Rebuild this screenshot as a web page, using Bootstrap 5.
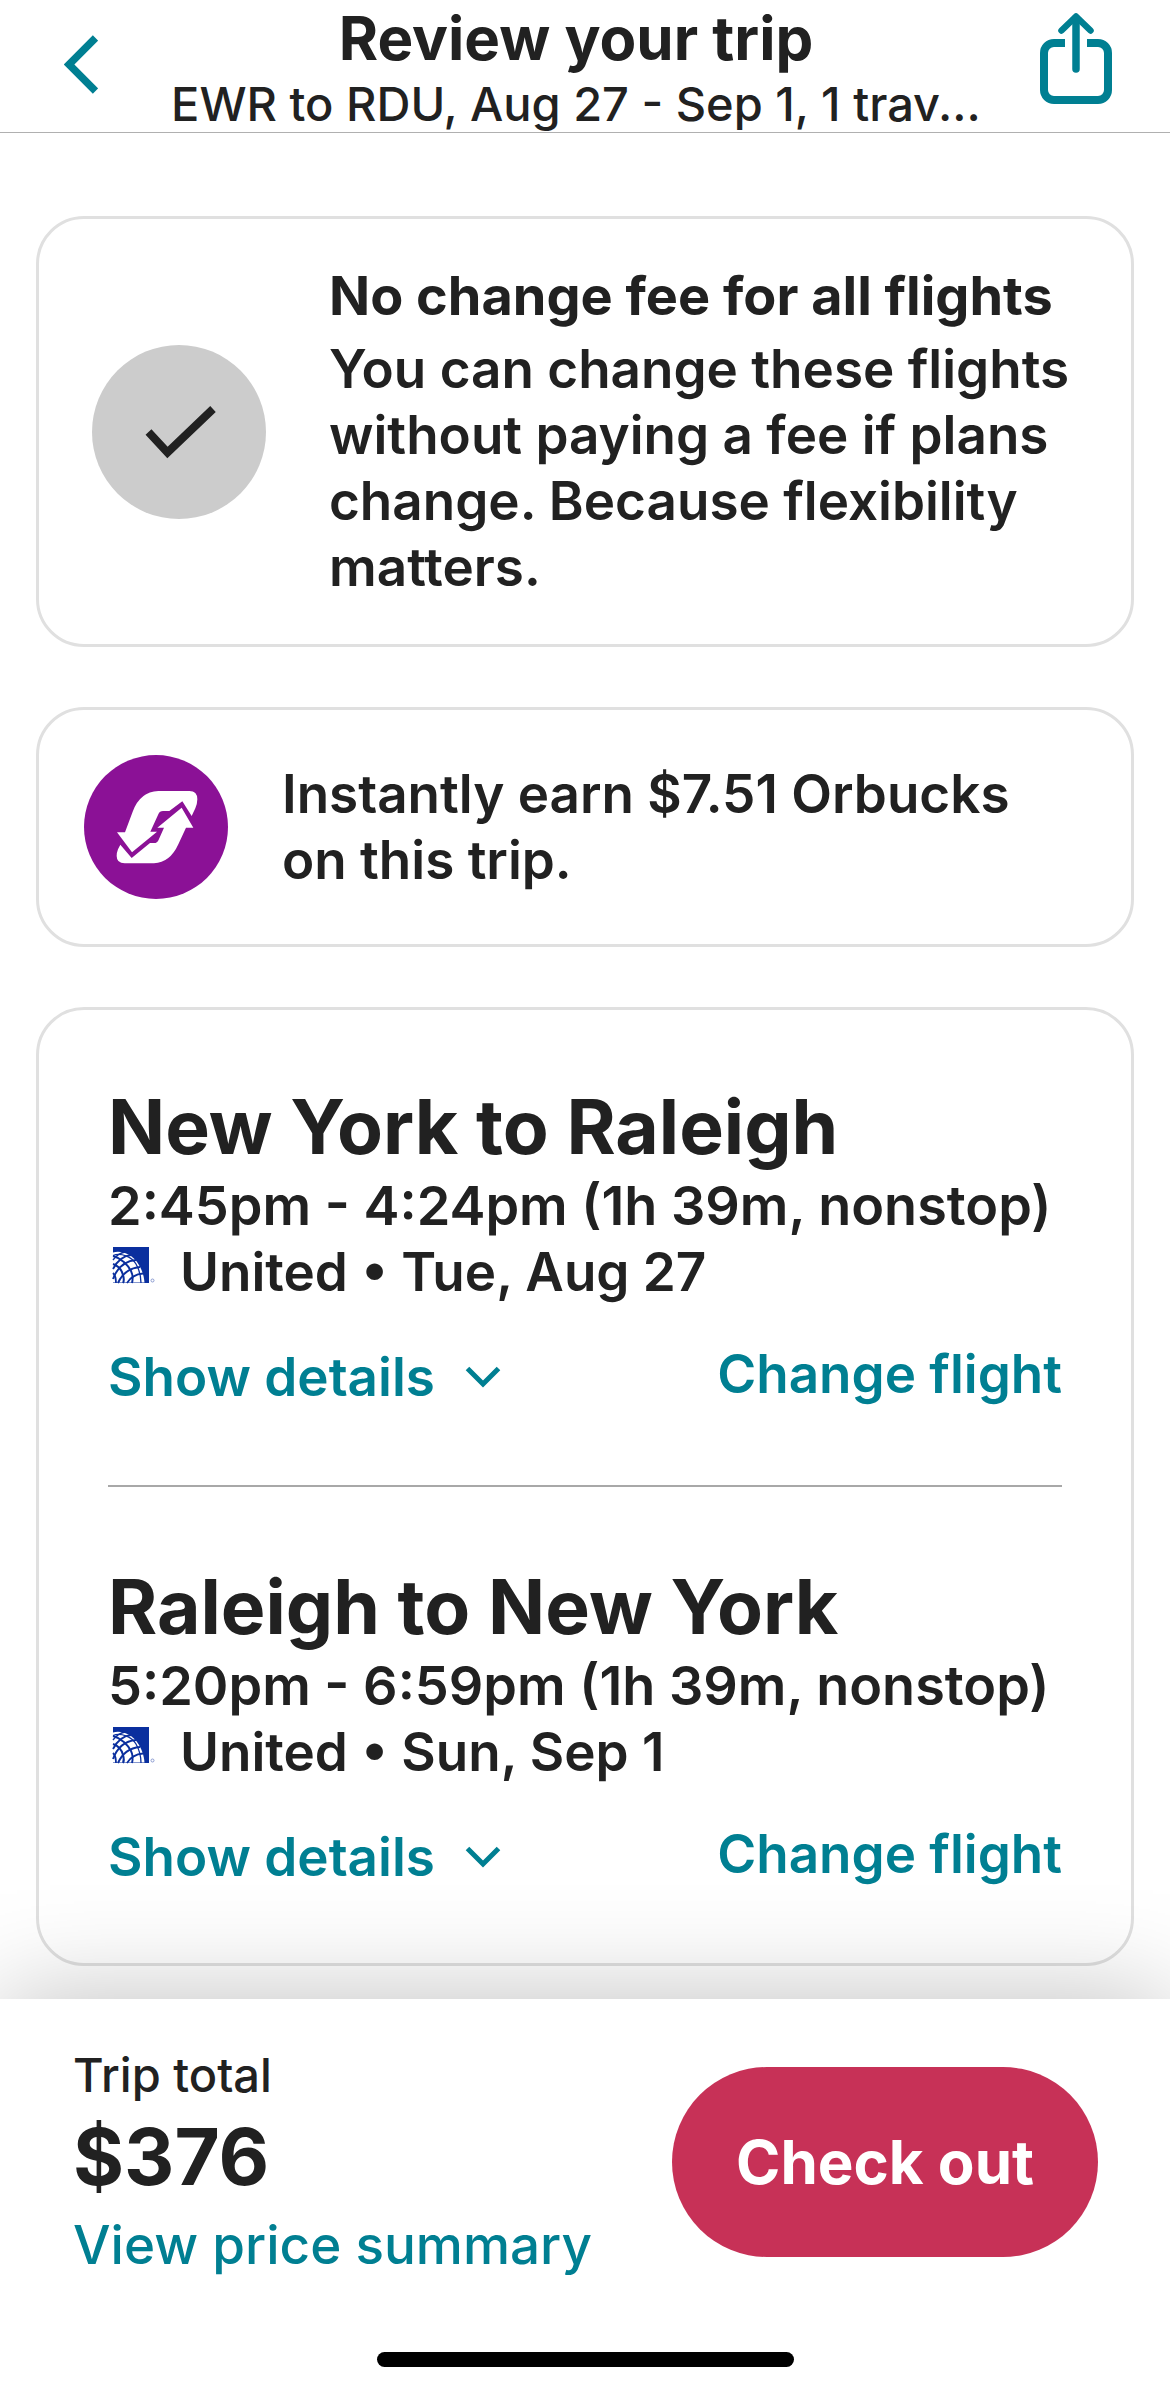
<!DOCTYPE html>
<html lang="en">
<head>
<meta charset="utf-8">
<meta name="viewport" content="width=device-width, initial-scale=1">
<title>Review your trip</title>
<link href="https://cdn.jsdelivr.net/npm/bootstrap@5.3.0/dist/css/bootstrap.min.css" rel="stylesheet">
<style>
  :root { --ink: #212121; --teal: #007f92; --line: #e0e0e0; }
  body { font-family: Inter, "Liberation Sans", sans-serif; font-size: 53px; line-height: 66px; font-weight: 600; color: var(--ink); background: #fff; }
  svg { display: block; flex: none; }
  .top-bar { padding: 2px 58px 0 64px; border-bottom: 1px solid #b0b0b0; }
  .top-title { font-size: 60px; line-height: 73px; font-weight: 700; }
  .top-sub { font-size: 47px; line-height: 57px; font-weight: 500; }
  .back-btn { width: 48px; }
  .plain-btn { border: 0; padding: 0; background: none; color: var(--teal); font-weight: 600; font-size: 53px; line-height: 66px; }
  .trip-main { padding: 83px 36px 33px; gap: 60px; }
  .trip-card { border: 3px solid var(--line); border-radius: 48px; }
  .fee-card { padding: 44px 53px; gap: 63px; }
  .fee-title { font-size: 54px; line-height: 66px; font-weight: 700; margin-bottom: 7px; }
  .reward-card { padding: 45px; gap: 54px; }
  .legs-card { padding: 70px 69px 73px; }
  .leg + .leg { border-top: 2px solid #a8a8a8; margin-top: 75px; padding-top: 73px; }
  .leg-title { font-size: 75px; line-height: 93px; font-weight: 700; }
  .leg-time { font-size: 54px; }
  .carrier { gap: 24px; }
  .leg-actions { margin-top: 36px; }
  .details-btn { gap: 30px; padding-top: 3px; }
  .teal-link { color: var(--teal); text-decoration: none; }
  .pay-bar { background: #fff; padding: 45px 72px 24px 73px; box-shadow: 0 0 100px rgba(0, 0, 0, .25); }
  .total-label { font-size: 47px; line-height: 62px; font-weight: 500; }
  .total-price { font-size: 78px; line-height: 102px; font-weight: 700; }
  .summary-link { line-height: 70px; margin-top: 2px; font-weight: 500; }
  .checkout-btn { min-width: 426px; height: 190px; background: #c73157; color: #fff; font-size: 60px; font-weight: 700; }
  .checkout-btn:hover { background: #b02a4c; color: #fff; }
  .home-bar { width: 417px; height: 15px; border-radius: 8px; background: #000; margin-top: 72px; }
</style>
</head>
<body class="d-flex flex-column min-vh-100">

<svg width="0" height="0" class="d-none" aria-hidden="true">
  <symbol id="globe" viewBox="0 0 48 48">
    <rect x="5" y="4" width="36" height="36" fill="#0a2f9e"/>
    <path d="M5 9.500C14 7 24 12 29 19C34 26 36 33 36.500 39.500H5Z" fill="#fff"/>
    <g fill="none" stroke="#0a2f9e" stroke-width="1.300">
      <path d="M5 12.500C13 9 24 14 28 21C32 28 33 34 33 40"/>
      <path d="M5 13C13 15 20 22 23 28C25 32 25 36 24 40" stroke-width="1.900"/>
      <path d="M5 21C11 23 14 28 15 32C16 35 16 38 15 40" stroke-width="2"/>
      <path d="M5 30C7 32 8 36 8 40" stroke-width="1.800"/>
      <path d="M5 17C8 13 12 10 17 9"/>
      <path d="M5 26C9 18 15 13 23 12" stroke-width="1.800"/>
      <path d="M5 36C9 25 17 18 28 17" stroke-width="1.900"/>
      <path d="M10 40C14 31 21 25 32 24" stroke-width="1.900"/>
      <path d="M19 40C22 35 28 31 35 30.500" stroke-width="1.800"/>
    </g>
    <circle cx="44.500" cy="37.500" r="1.500" fill="none" stroke="#8a9bd0" stroke-width="1"/>
  </symbol>
  <symbol id="chev" viewBox="0 0 36 22">
    <path d="M2.500 2.500L18 18L33.500 2.500" fill="none" stroke="currentColor" stroke-width="5"/>
  </symbol>
</svg>

<header class="top-bar d-flex align-items-start">
  <button type="button" class="plain-btn back-btn" aria-label="Back">
    <svg class="mt-4" width="34" height="76" viewBox="0 0 34 76"><path d="M31.500 12L5 38.500L31.500 65" fill="none" stroke="currentColor" stroke-width="7.500"/></svg>
  </button>
  <div class="flex-grow-1 text-center text-nowrap overflow-hidden">
    <h1 class="top-title m-0">Review your trip</h1>
    <div class="top-sub">EWR to RDU, Aug 27 - Sep 1, 1 trav...</div>
  </div>
  <button type="button" class="plain-btn" aria-label="Share">
    <svg width="72" height="104" viewBox="0 0 72 104" fill="none" stroke="currentColor">
      <path d="M25 41H14A10 10 0 0 0 4 51V88A10 10 0 0 0 14 98H58A10 10 0 0 0 68 88V51A10 10 0 0 0 58 41H47" stroke-width="8"/>
      <path d="M36 16V67" stroke-width="7.500" stroke-linecap="round"/>
      <path d="M21.500 28.500L36 14.500L50.500 28.500" stroke-width="6.500" stroke-linecap="round" stroke-linejoin="round"/>
    </svg>
  </button>
</header>

<main class="trip-main d-flex flex-column">
  <section class="trip-card fee-card d-flex align-items-center">
    <svg width="174" height="174" viewBox="0 0 174 174" aria-hidden="true">
      <circle cx="87" cy="87" r="87" fill="#ccc"/>
      <path d="M56.500 87L75.500 107.500L121 64" fill="none" stroke="#212121" stroke-width="8"/>
    </svg>
    <div>
      <h2 class="fee-title">No change fee for all flights</h2>
      <p class="m-0">You can change these flights without paying a fee if plans change. Because flexibility matters.</p>
    </div>
  </section>

  <section class="trip-card reward-card d-flex align-items-center">
    <svg width="144" height="144" viewBox="42 45 432 432" aria-hidden="true">
      <circle cx="258" cy="261" r="216" fill="#8b1196"/>
      <path fill="#fff" d="M265 153H358Q382 153 382 178Q382 190 376 205L365 228L337 184L298 213H279Q269 213 265 223L241 275H261L186 337L141 277H165L188 215Q210 155 265 153Z"/>
      <path fill="#fff" d="M252 370H164Q140 370 140 348Q140 338 144 328L151 314L185 354L240 309H252Q262 309 266 299L282 263H262L335 203L370 263H348L325 313Q300 368 252 370Z"/>
    </svg>
    <p class="m-0">Instantly earn $7.51 Orbucks on this trip.</p>
  </section>

  <section class="trip-card legs-card">
    <article class="leg">
      <h2 class="leg-title m-0">New York to Raleigh</h2>
      <div class="leg-time">2:45pm - 4:24pm (1h 39m, nonstop)</div>
      <div class="carrier d-flex align-items-start">
        <svg class="mt-1" width="48" height="48" role="img" aria-label="United"><use href="#globe"/></svg>
        <span>United • Tue, Aug 27</span>
      </div>
      <div class="leg-actions d-flex justify-content-between align-items-start">
        <button type="button" class="plain-btn details-btn d-flex align-items-center">Show details
          <svg width="36" height="22" aria-hidden="true"><use href="#chev"/></svg>
        </button>
        <a class="teal-link" href="#">Change flight</a>
      </div>
    </article>
    <article class="leg">
      <h2 class="leg-title m-0">Raleigh to New York</h2>
      <div class="leg-time">5:20pm - 6:59pm (1h 39m, nonstop)</div>
      <div class="carrier d-flex align-items-start">
        <svg class="mt-1" width="48" height="48" role="img" aria-label="United"><use href="#globe"/></svg>
        <span>United • Sun, Sep 1</span>
      </div>
      <div class="leg-actions d-flex justify-content-between align-items-start">
        <button type="button" class="plain-btn details-btn d-flex align-items-center">Show details
          <svg width="36" height="22" aria-hidden="true"><use href="#chev"/></svg>
        </button>
        <a class="teal-link" href="#">Change flight</a>
      </div>
    </article>
  </section>
</main>

<footer class="pay-bar position-relative mt-auto">
  <div class="d-flex justify-content-between align-items-center">
    <div>
      <div class="total-label">Trip total</div>
      <div class="total-price">$376</div>
      <a class="teal-link summary-link d-block" href="#">View price summary</a>
    </div>
    <button type="button" class="btn checkout-btn rounded-pill border-0">Check out</button>
  </div>
  <div class="home-bar mx-auto"></div>
</footer>

<script src="https://cdn.jsdelivr.net/npm/bootstrap@5.3.0/dist/js/bootstrap.bundle.min.js"></script>
</body>
</html>
